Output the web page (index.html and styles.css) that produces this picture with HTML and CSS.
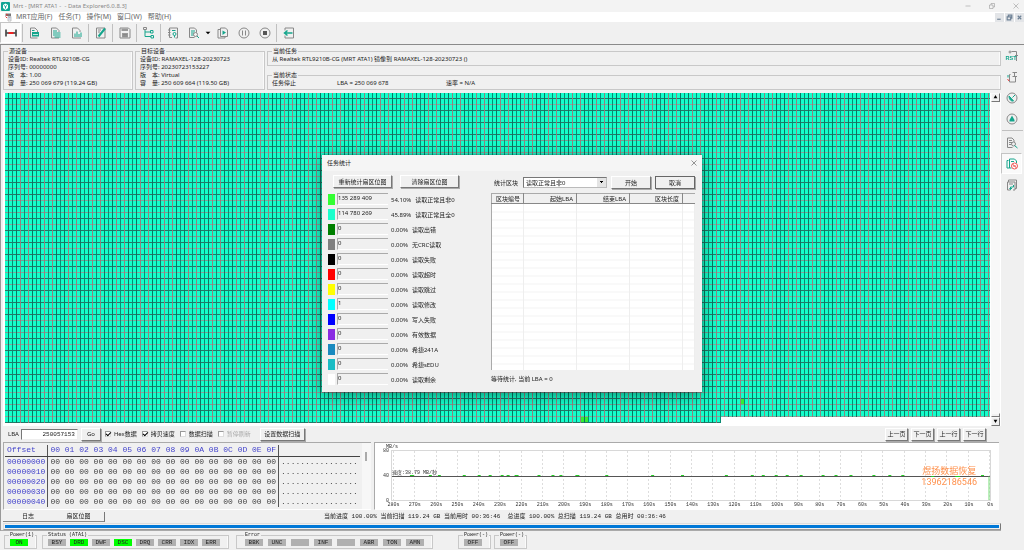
FILE: index.html
```html
<!DOCTYPE html>
<html lang="zh-CN">
<head>
  <meta charset="UTF-8" />
  <title>Mrt - [MRT ATA1 -  - Data Explorer6.0.8.3]</title>
  <link rel="stylesheet" href="styles.css">
</head>
<body>
<div class="app">

  <header class="titlebar">
    <svg class="logo" viewBox="0 0 18 18"><rect width="18" height="18" rx="2" fill="#12a594"/><path d="M4 6l5-3 5 3v6l-5 4-5-4z" fill="#fff"/><path d="M6 7l3 2 3-2M9 9v4" stroke="#12a594" stroke-width="2" fill="none"/></svg>
    <span class="title">Mrt - [MRT ATA1 -&nbsp; - Data Explorer6.0.8.3]</span>
    <div class="win-buttons">
      <button aria-label="最小化"><svg viewBox="0 0 12 12"><path d="M1 6h10"/></svg></button>
      <button aria-label="还原"><svg viewBox="0 0 12 12"><path d="M1 4h7v7H1zM4 4V1h7v7H8"/></svg></button>
      <button aria-label="关闭"><svg viewBox="0 0 12 12"><path d="M1 1l10 10M11 1L1 11"/></svg></button>
    </div>
  </header>

  <nav class="menubar">
    <svg class="doc-icon" viewBox="0 0 14 18"><path d="M1 1h11v5H1z" fill="#777"/><path d="M2 2l4 3" stroke="#e33" stroke-width="2"/><path d="M6 7h6v9H6z" fill="#fff" stroke="#888"/><path d="M7 9h4M7 12h4" stroke="#46a"/><path d="M1 7l3 3" stroke="#e33" stroke-width="2"/></svg>
    <a href="#">MRT应用(F)</a>
    <a href="#">任务(T)</a>
    <a href="#">操作(M)</a>
    <a href="#">窗口(W)</a>
    <a href="#">帮助(H)</a>
    <div class="mdi-buttons">
      <button aria-label="最小化"><svg viewBox="0 0 12 12"><path d="M2 9h6"/></svg></button>
      <button aria-label="还原"><svg viewBox="0 0 12 12"><path d="M2 5h6v5H2zM4 5V2h6v5H8"/></svg></button>
      <button aria-label="关闭"><svg viewBox="0 0 12 12"><path d="M3 3l6 6M9 3L3 9"/></svg></button>
    </div>
  </nav>

  <div class="toolbar">
    <button class="tool active" aria-label="连接"><svg viewBox="0 0 24 24"><path d="M2 5v14M22 5v14" stroke="#333" stroke-width="3"/><path d="M3 12h18" stroke="#333" stroke-width="3"/><path d="M7 12h10" stroke="#e22" stroke-width="4"/></svg></button>
    <i class="sep"></i>
    <button class="tool" aria-label="十六进制"><svg viewBox="0 0 24 24"><path class="g" d="M17 22H3V2h9l5 5v3"/><path class="t" d="M6 7h5"/><path d="M6 10h14v9H6z" fill="#14a58c"/><path d="M8 15h10" stroke="#bfe8e0" stroke-width="2"/></svg></button>
    <button class="tool" aria-label="列表"><svg viewBox="0 0 24 24"><path class="g" d="M18 22H3V2h10l5 5v3"/><path class="t" d="M6 8h8M6 12h15M6 16h15M9 20h12"/></svg></button>
    <button class="tool" aria-label="统计"><svg viewBox="0 0 24 24"><path class="g" d="M13 2H3v20h17M13 2l5 5v3"/><path class="t" d="M8 20v-7M12 20V9M16 20v-6M20 20v-9"/></svg></button>
    <i class="sep"></i>
    <button class="tool" aria-label="编辑"><svg viewBox="0 0 24 24"><path class="g" d="M3 2h17v20H3z"/><path class="g" d="M6 6h6M6 10h4"/><path d="M20 3L7 19" stroke="#14a58c" stroke-width="4"/></svg></button>
    <i class="sep"></i>
    <button class="tool" aria-label="保存"><svg viewBox="0 0 24 24"><path class="g" d="M2 2h17l3 3v17H2z"/><path d="M5 3h13v5H5zM6 12h12v9H6z" fill="#999"/><path class="g" d="M8 15h8M8 18h8"/></svg></button>
    <i class="sep"></i>
    <button class="tool" aria-label="结构"><svg viewBox="0 0 24 24"><path class="t" d="M4 5v14h12M4 10h11M15 7h5v5h-5zM16 17h5v5h-5z"/><path class="g" d="M1 1h6v4H1z"/></svg></button>
    <i class="sep"></i>
    <button class="tool" aria-label="参数"><svg viewBox="0 0 24 24"><path class="g" d="M5 2h16v20h-4M5 2v19h5M2 6h5M2 11h5M2 16h5"/><path class="t" d="M10 7h7"/><circle class="t" cx="15" cy="14" r="3"/><path class="t" d="M15 17v4"/></svg></button>
    <button class="tool" aria-label="查找"><svg viewBox="0 0 24 24"><path class="g" d="M3 2h10l4 4v5M3 2v19h10"/><path class="t" d="M6 8h8M6 12h6M6 16h5M18 18l4 4"/><circle class="g" cx="15" cy="15" r="4"/></svg></button>
    <button class="drop" aria-label="更多"><svg viewBox="0 0 10 6"><path d="M1 1h8L5 5z"/></svg></button>
    <button class="tool" aria-label="复制"><svg viewBox="0 0 24 24"><path class="g" d="M6 5H2v17h14v-3M7 2h10l4 4v13H7z"/><path d="M11 7l7 4-7 5z" fill="#14a58c"/></svg></button>
    <button class="tool" aria-label="暂停"><svg viewBox="0 0 24 24"><circle class="g" cx="12" cy="12" r="10"/><path class="g" d="M9 7v10M15 7v10"/></svg></button>
    <button class="tool" aria-label="停止"><svg viewBox="0 0 24 24"><circle class="g" cx="12" cy="12" r="10"/><path d="M8 8h8v8H8z" fill="#555"/></svg></button>
    <i class="sep"></i>
    <button class="tool" aria-label="退出"><svg viewBox="0 0 24 24"><path class="g" d="M4 7V2h17v20H4v-5"/><path d="M19 12H3M9 7l-6 5 6 5" stroke="#14a58c" stroke-width="3" fill="none"/></svg></button>
  </div>

  <div class="body">
    <main class="workspace">

      <section class="info">
        <fieldset class="device">
          <legend>源设备</legend>
          <p>设备ID: Realtek RTL9210B-CG</p>
          <p>序列号: 00000000</p>
          <p>版　本: 1.00</p>
          <p>容　量: 250 069 679 (119.24 GB)</p>
        </fieldset>
        <fieldset class="device">
          <legend>目标设备</legend>
          <p>设备ID: RAMAXEL-128-20230723</p>
          <p>序列号: 20230723153227</p>
          <p>版　本: Virtual</p>
          <p>容　量: 250 609 664 (119.50 GB)</p>
        </fieldset>
        <div class="task">
          <fieldset>
            <legend>当前任务</legend>
            <p>从 Realtek RTL9210B-CG (MRT ATA1) 镜像到 RAMAXEL-128-20230723 ()</p>
          </fieldset>
          <fieldset>
            <legend>当前状态</legend>
            <p class="state"><span>任务停止</span><span>LBA = 250 069 678</span><span>速率 = N/A</span></p>
          </fieldset>
        </div>
      </section>

      <section class="map">
        <div class="map-area"><canvas id="sectorMap"></canvas></div>
        <div class="scroll">
          <button aria-label="向上">▲</button>
          <span class="thumb"></span>
          <button aria-label="向下">▼</button>
        </div>
      </section>

      <section class="controls">
        <label for="lba">LBA</label>
        <input id="lba" class="lba" type="text" value="250057153">
        <button class="btn go">Go</button>
        <label class="check"><input type="checkbox" checked>Hex数据</label>
        <label class="check"><input type="checkbox" checked>拷贝速度</label>
        <label class="check"><input type="checkbox">数据扫描</label>
        <label class="check disabled"><input type="checkbox" disabled>暂停刷新</label>
        <button class="btn set">设置数据扫描</button>
        <div class="pager">
          <button class="btn">上一页</button>
          <button class="btn">下一页</button>
          <button class="btn">上一行</button>
          <button class="btn">下一行</button>
        </div>
      </section>

      <section class="panels">
        <div class="hex">
          <table>
            <thead>
              <tr><th>Offset</th><th>00 01 02 03 04 05 06 07 08 09 0A 0B 0C 0D 0E 0F</th><th></th></tr>
            </thead>
            <tbody id="hexRows"></tbody>
          </table>
          <div class="hex-scroll"><span></span></div>
        </div>
        <div class="chart">
          <div class="unit">MB/s</div>
          <div class="chart-row">
            <div class="y-axis"><span>80</span><span>40</span><span>0</span></div>
            <div class="plot">
              <div class="grid" id="grid"></div>
              <svg class="line" viewBox="0 0 600 48" preserveAspectRatio="none">
                <path d="M0 25H600" stroke="#555" stroke-width="1"/>
                <path d="M18 24h4M37 24h3M46 24h3M71 24h3M86 24h3M97 24h3M109 24h3M115 24h3M123 24h4M146 24h3M160 24h3M168 24h3M184 24h4M214 24h3M260 24h3M290 24h3M334 24h3M360 24h3M371 24h3M384 24h3M395 24h3M409 24h3M431 24h3M444 24h3M459 24h3M482 24h3M498 24h3M511 24h3M541 25h3M565 25h5M591 24h3" stroke="#2c2" stroke-width="1"/>
                <path d="M599 25V48" stroke="#7d7" stroke-width="1"/>
              </svg>
              <span class="speed">速度:38.79 MB/秒</span>
              <div class="contact">煜扬数据恢复<br>13962186546</div>
            </div>
          </div>
          <div class="x-axis" id="xAxis"></div>
        </div>
      </section>

      <section class="tabs">
        <button class="tab">日志</button>
        <button class="tab current">扇区位图</button>
        <p class="progress-text"><span>当前进度 100.00% 当前扫描 119.24 GB 当前用时 00:36:46</span><span>总进度 100.00% 总扫描 119.24 GB 总用时 00:36:46</span></p>
      </section>
      <div class="progress"><div></div></div>
    </main>

    <aside class="sidebar">
      <button class="tool" aria-label="复位"><svg viewBox="0 0 24 24"><path class="g" d="M11 3h10v19M18 11h6"/><circle class="g" cx="8" cy="4" r="2"/><text x="-1" y="19">RST</text></svg></button>
      <button class="tool" aria-label="电源"><svg viewBox="0 0 24 24"><path class="g" d="M9 7H7v15h12V11M13 3h9M17 3v8M13 11h9"/><path class="t" d="M4 8v5"/><path d="M3 16l3 4" stroke="#e44" stroke-width="2"/></svg></button>
      <button class="tool" aria-label="转速"><svg viewBox="0 0 24 24"><circle class="g" cx="12" cy="12" r="10"/><path d="M6 8c0 8 5 11 9 10l-4-5zM13 11l5-5" fill="#14a58c" stroke="#14a58c" stroke-width="2"/></svg></button>
      <button class="tool" aria-label="警告"><svg viewBox="0 0 24 24"><circle class="g" cx="12" cy="12" r="10"/><path d="M12 5l5 9v3H7v-3z" fill="#14a58c"/></svg></button>
      <i class="hsep"></i>
      <button class="tool" aria-label="日志查找"><svg viewBox="0 0 24 24"><path class="g" d="M16 10V6l-4-4H3v19h10M6 7h6M6 11h6M6 15h4"/><circle class="g" cx="15" cy="14" r="4"/><path class="t" d="M17 17l6 5"/></svg></button>
      <button class="tool active" aria-label="停用"><svg viewBox="0 0 24 24"><path class="t" d="M5 5H2v15h5M7 2h10l4 4v4M7 2v18h4M10 7h6"/><circle cx="17" cy="16" r="6" fill="#fff" stroke="#e55" stroke-width="2"/><path d="M13 12l8 8M14 16h6" stroke="#e55" stroke-width="2"/></svg></button>
      <button class="tool" aria-label="导出"><svg viewBox="0 0 24 24"><path class="g" d="M9 22H3V6h15v16h-4M5 6V2h16v17h-3M6 10h8"/><path class="t" d="M15 12v4H9v5M7 18l2 3 3-3"/></svg></button>
    </aside>
  </div>

  <footer class="statusbar">
    <fieldset class="power">
      <legend>Power(1)</legend>
      <span class="led on">ON</span>
    </fieldset>
    <fieldset class="status">
      <legend>Status (ATA1)</legend>
      <span class="led">BSY</span><span class="led on">DRD</span><span class="led">DWF</span><span class="led on">DSC</span><span class="led">DRQ</span><span class="led">CRR</span><span class="led">IDX</span><span class="led">ERR</span>
    </fieldset>
    <fieldset class="error">
      <legend>Error</legend>
      <span class="led">BBK</span><span class="led">UNC</span><span class="led"></span><span class="led">INF</span><span class="led"></span><span class="led">ABR</span><span class="led">TON</span><span class="led">AMN</span>
    </fieldset>
    <fieldset class="power off">
      <legend>Power(-)</legend>
      <span class="led">OFF</span>
    </fieldset>
    <fieldset class="power">
      <legend>Power(-)</legend>
      <span class="led">OFF</span>
    </fieldset>
  </footer>
</div>

<div class="overlay">
  <div class="dialog" role="dialog" aria-labelledby="dialogTitle">
    <div class="dialog-title">
      <span id="dialogTitle">任务统计</span>
      <button aria-label="关闭"><svg viewBox="0 0 12 12"><path d="M1 1l10 10M11 1L1 11"/></svg></button>
    </div>
    <div class="dialog-body">
      <div class="stats">
        <div class="stat-buttons">
          <button class="btn">重新统计扇区位图</button>
          <button class="btn">清除扇区位图</button>
        </div>
        <div id="statRows"></div>
      </div>
      <div class="blocks">
        <div class="block-bar">
          <label for="blockType">统计区块</label>
          <select id="blockType"><option>读取正常且非0</option></select>
          <button class="btn">开始</button>
          <button class="btn default">取消</button>
        </div>
        <table class="block-table">
          <thead>
            <tr><th>区块编号</th><th>起始LBA</th><th>结束LBA</th><th>区块长度</th><th></th></tr>
          </thead>
          <tbody>
            <tr><td></td><td></td><td></td><td></td><td></td></tr>
          </tbody>
        </table>
        <p class="wait">等待统计, 当前 LBA = 0</p>
      </div>
    </div>
  </div>
</div>

<script>
  // color, count, percent, name
  const stats = [
    ['#33ff33', '135 289 409', '54.10%', '读取正常且非0'],
    ['#1affcc', '114 780 269', '45.89%', '读取正常且全0'],
    ['#008000', '0', '0.00%', '读取出错'],
    ['#808080', '0', '0.00%', '无CRC读取'],
    ['#000000', '0', '0.00%', '读取失败'],
    ['#ff0000', '0', '0.00%', '读取超时'],
    ['#ffff00', '0', '0.00%', '读取跳过'],
    ['#00ffff', '1', '0.00%', '读取修改'],
    ['#0000ff', '0', '0.00%', '写入失败'],
    ['#8a2be2', '0', '0.00%', '有效数据'],
    ['#1a8abf', '0', '0.00%', '希捷241A'],
    ['#1abcc4', '0', '0.00%', '希捷sEDU'],
    ['#ffffff', '0', '0.00%', '读取剩余']
  ];
  document.getElementById('statRows').innerHTML = stats.map((s, i) => `
    <div class="stat">
      <i class="swatch" style="background:${s[0]}"></i>
      <input id="stat${i}" type="text" value="${s[1]}" readonly>
      <label for="stat${i}"><span>${s[2]}</span><span>${s[3]}</span></label>
    </div>`).join('');

  let hex = '';
  for (let i = 0; i < 5; i++) {
    hex += `<tr><th>000000${i}0</th><td>${Array(16).fill('00').join(' ')}</td><td>${'.'.repeat(16)}</td></tr>`;
  }
  document.getElementById('hexRows').innerHTML = hex;

  let ticks = '';
  let lines = '';
  for (let s = 280; s >= 0; s -= 10) {
    ticks += `<span>${s}s</span>`;
    lines += '<i></i>';
  }
  document.getElementById('xAxis').innerHTML = ticks;
  document.getElementById('grid').innerHTML = lines;

  const CELL_W = 4;
  const CELL_H = 6;
  function drawMap() {
    const canvas = document.getElementById('sectorMap');
    const area = canvas.parentElement;
    canvas.width = area.clientWidth;
    canvas.height = area.clientHeight;
    const ctx = canvas.getContext('2d');
    const cols = Math.ceil(canvas.width / CELL_W);
    const rows = Math.floor(canvas.height / CELL_H);
    const last = Math.round(cols * 0.723);
    const vLines = ['#0b7561', '#0b8a72', '#0b7561', '#8d8580', '#0b8a72', '#8d8580'];
    const hLines = ['#2b7466', '#8aa39a', '#2b7466', '#7c9a90'];

    for (let r = 0; r < rows; r++) {
      const count = r === rows - 1 ? last : cols;
      const y = r * CELL_H;
      ctx.fillStyle = '#14ffcb';
      ctx.fillRect(0, y, count * CELL_W, CELL_H);
      ctx.fillStyle = hLines[r % hLines.length];
      ctx.fillRect(0, y + 5, count * CELL_W, 1);
      for (let c = 0; c < count; c++) {
        ctx.fillStyle = vLines[c % vLines.length];
        ctx.fillRect(c * CELL_W + 3, y, 1, CELL_H);
      }
    }
    // sectors read with data
    ctx.fillStyle = '#33ee33';
    const x = Math.round(cols * 0.585) * CELL_W;
    ctx.fillRect(x, (rows - 1) * CELL_H, 3, 5);
    ctx.fillRect(x + CELL_W, (rows - 1) * CELL_H, 3, 5);
    ctx.fillRect(Math.round(cols * 0.745) * CELL_W, (rows - 4) * CELL_H, 3, 5);
  }
  window.addEventListener('resize', drawMap);
  drawMap();
</script>
</body>
</html>
```
FILE: styles.css
```css
* {
  box-sizing: border-box;
}
body {
  margin: 0;
  background: #f0f0f0;
  color: #222;
  font: 6px/8px "Noto Sans", "Noto Sans CJK SC", sans-serif;
}
p {
  margin: 0;
}
button, input, select {
  margin: 0;
  padding: 0;
  border: 0;
  border-radius: 0;
  background: none;
  color: inherit;
  font: inherit;
  appearance: none;
}
fieldset {
  margin: 0;
  padding: 0 4px 2px;
  min-width: 0;
  border: 1px solid #c8c8c8;
  box-shadow: inset -1px 0 #fafafa;
}
legend {
  padding: 0 1px;
}
svg {
  display: block;
  fill: none;
}
.app {
  display: flex;
  flex-direction: column;
  height: 100vh;
  min-height: 500px;
}

/* title and menu */
.titlebar {
  display: flex;
  align-items: center;
  height: 12px;
  padding: 0 5px 0 1px;
  background: #f3f3f3;
  color: #888;
  gap: 3px;
}
.logo {
  width: 9px;
  height: 9px;
}
.win-buttons {
  display: flex;
  gap: 18px;
  margin-left: auto;
}
.win-buttons svg {
  width: 6px;
  height: 6px;
  stroke: #888;
  stroke-width: 1;
}
.menubar {
  display: flex;
  align-items: center;
  height: 10px;
  padding-left: 5px;
  background: #fff;
  gap: 6px;
  font-size: 7px;
}
.menubar a {
  color: #666;
  text-decoration: none;
}
.doc-icon {
  width: 7px;
  height: 9px;
  margin-right: -2px;
}
.mdi-buttons {
  display: flex;
  gap: 1px;
  margin-left: auto;
}
.mdi-buttons button {
  padding: 1px;
  background: #e3e5e8;
}
.mdi-buttons svg {
  width: 7px;
  height: 7px;
  stroke: #6f8296;
  stroke-width: 2;
}

/* toolbar */
.toolbar {
  display: flex;
  height: 23px;
  border-bottom: 1px solid #8a8a8a;
}
.tool {
  display: flex;
  align-items: center;
  justify-content: center;
  width: 21px;
  height: 21px;
}
.tool svg {
  width: 12px;
  height: 12px;
  overflow: visible;
}
.tool.active {
  background: #fafafa;
  border: 1px solid #c4c4c4;
  border-right-color: #fff;
  border-bottom-color: #fff;
}
.g {
  stroke: #888;
  stroke-width: 2;
}
.t {
  stroke: #14a58c;
  stroke-width: 2;
}
.tool text {
  fill: #14a58c;
  font: bold 11px "Liberation Sans", sans-serif;
}
.drop {
  width: 8px;
}
.drop svg {
  width: 6px;
  height: 4px;
  margin-left: 1px;
  fill: #000;
}
.sep {
  width: 1px;
  margin: 2px 1px;
  background: #c0c0c0;
}
.body {
  display: flex;
  flex: 1;
  min-height: 0;
}
.workspace {
  display: flex;
  flex: 1;
  flex-direction: column;
  min-width: 0;
  padding: 2px 0 0 2px;
  border-left: 1px solid #999;
  border-bottom: 1px solid #aaa;
}
.sidebar {
  width: 23px;
}
.hsep {
  display: block;
  height: 1px;
  margin: 1px;
  background: #c0c0c0;
}

/* device info */
.info {
  display: flex;
  gap: 2px;
}
.device {
  width: 130px;
}
.task {
  display: flex;
  flex: 1;
  flex-direction: column;
  justify-content: space-between;
}
.state {
  display: flex;
}
.state span:first-child {
  width: 65px;
}
.state span:nth-child(2) {
  width: 109px;
}

/* sector map */
.map {
  display: flex;
  flex: 1;
  min-height: 0;
  margin-top: 3px;
  padding-left: 2px;
  background: #fff;
}
.map-area {
  flex: 1;
  min-width: 0;
  overflow: hidden;
}
.map-area canvas {
  display: block;
}
.scroll {
  display: flex;
  flex-direction: column;
  width: 9px;
  margin: 0 1px;
  background: #f8f8f8;
}
.scroll button, .thumb {
  height: 9px;
  border: 1px solid #f8f8f8;
  border-right-color: #777;
  border-bottom-color: #777;
  background: #f0f0f0;
  font-size: 4px;
  line-height: 6px;
  color: #000;
}
.thumb {
  height: 4px;
  margin-top: auto;
}

/* controls */
.controls {
  display: flex;
  align-items: center;
  height: 16px;
  padding: 0 15px 0 5px;
}
.lba {
  width: 57px;
  height: 11px;
  margin: 0 3px 0 2px;
  padding-right: 2px;
  background: #fff;
  border: 1px solid #777;
  border-right-color: #eee;
  border-bottom-color: #eee;
  font: 6px "Liberation Mono", monospace;
  text-align: right;
}
.btn {
  height: 13px;
  background: #f0f0f0;
  border: 1px solid #fff;
  border-right-color: #777;
  border-bottom-color: #777;
  box-shadow: 1px 1px #aaa;
  white-space: nowrap;
}
.go {
  width: 20px;
  margin-right: 4px;
}
.set {
  width: 45px;
  margin-left: 4px;
}
.check {
  display: flex;
  align-items: center;
  gap: 3px;
  margin-right: 5px;
}
.check input {
  width: 6px;
  height: 6px;
  background: #fff;
  border: 1px solid #999;
  border-right-color: #ddd;
  border-bottom-color: #ddd;
}
.check input:checked::before {
  content: "";
  display: block;
  width: 4px;
  height: 2px;
  border: solid #000;
  border-width: 0 0 1px 1px;
  transform: rotate(-45deg);
}
.disabled {
  color: #aaa;
}
.pager {
  display: flex;
  gap: 3px;
  margin-left: auto;
}
.pager .btn {
  width: 23px;
}

/* hex and chart */
.panels {
  display: flex;
  height: 68px;
  gap: 3px;
}
.hex {
  display: flex;
  justify-content: space-between;
  width: 368px;
  border: 1px solid #aaa;
  border-right: 0;
  border-bottom-color: #fff;
}
.hex table {
  margin: 2px 0 0 1px;
  align-self: flex-start;
  border-collapse: collapse;
  font: 8px/10px "Liberation Mono", monospace;
  white-space: pre;
}
.hex th {
  padding: 0 2px;
  color: #4444cc;
  font-weight: normal;
  text-align: left;
}
.hex td {
  padding: 0 2px;
  color: #444;
}
.hex tr > :first-child {
  border-right: 1px solid #555;
}
.hex tr > :nth-child(2) {
  border-right: 1px solid #555;
}
.hex thead th {
  height: 11px;
  border-bottom: 1px solid #444;
}
.hex-scroll {
  width: 9px;
  padding: 9px 3px;
  background: #f7f7f7;
}
.hex-scroll span {
  display: block;
  width: 2px;
  height: 9px;
  background: #aaa;
}
.chart {
  display: flex;
  flex: 1;
  flex-direction: column;
  margin-right: 2px;
  padding: 1px 8px 0 0;
  background: #fff;
  border: 1px solid #aaa;
  border-right: 0;
  border-bottom-color: #fff;
  color: #333;
  font: 5px/6px "Liberation Mono", "Noto Sans CJK SC", monospace;
}
.unit {
  padding-left: 11px;
}
.chart-row {
  display: flex;
  flex: 1;
}
.y-axis {
  display: flex;
  flex-direction: column;
  justify-content: space-between;
  width: 16px;
  margin: -2px 0 -3px;
  padding-right: 2px;
  text-align: right;
}
.plot {
  position: relative;
  flex: 1;
  border: 1px solid #d8d8d8;
}
.grid {
  display: flex;
  justify-content: space-between;
  height: 100%;
  padding-left: 1px;
}
.grid i {
  width: 1px;
  background: repeating-linear-gradient(#ddd 0 2px, #fff 2px 4px);
}
.line {
  position: absolute;
  inset: 0;
  width: 100%;
  height: 100%;
}
.speed {
  position: absolute;
  left: 0;
  bottom: 50%;
}
.contact {
  position: absolute;
  right: 13px;
  top: 15px;
  color: #ff914d;
  font: 9px/11px Roboto, "Noto Sans CJK SC", sans-serif;
  text-align: center;
}
.x-axis {
  display: flex;
  justify-content: space-between;
  height: 8px;
  padding: 1px 0 0 18px;
}
.x-axis span {
  display: flex;
  justify-content: center;
  width: 1px;
}

/* tabs and progress */
.tabs {
  display: flex;
  align-items: center;
  height: 13px;
}
.tab {
  width: 50px;
  height: 10px;
  border-bottom: 1px solid #888;
}
.tab.current {
  width: 52px;
  border-right: 1px solid #777;
}
.progress-text {
  display: flex;
  gap: 7px;
  margin-left: 219px;
  font-family: "Liberation Mono", "Noto Sans CJK SC", monospace;
  white-space: nowrap;
}
.progress {
  height: 7px;
  padding: 1px;
  border: 1px solid #ddd;
  border-right-color: #777;
  border-bottom-color: #999;
}
.progress div {
  height: 3px;
  background: #0078d7;
}

/* status bar */
.statusbar {
  display: flex;
  height: 19px;
  padding: 1px 4px;
  gap: 5px;
  font: 5px/6px "Liberation Mono", monospace;
}
.statusbar fieldset {
  display: flex;
  gap: 4px;
  height: 17px;
  padding: 1px 5px;
}
.statusbar legend {
  margin-left: -1px;
}
.led {
  width: 18px;
  height: 7px;
  background: #b0b0b0;
  font-size: 6px;
  line-height: 7px;
  text-align: center;
}
.led.on {
  background: #0f0;
}
.power {
  width: 33px;
}
.status {
  width: 187px;
}
.statusbar .error {
  width: 197px;
  gap: 5px;
  margin: 0 20px 0 2px;
  padding-left: 8px;
}
.power.off {
  margin-right: -2px;
}

/* statistics dialog */
.overlay {
  position: fixed;
  inset: 0;
  display: flex;
  align-items: center;
  justify-content: center;
  padding-bottom: 3px;
}
.dialog {
  width: 380px;
  background: #f0f0f0;
  box-shadow: 0 3px 14px rgba(0, 0, 0, 0.45), 0 0 1px #333;
}
.dialog-title {
  display: flex;
  align-items: center;
  justify-content: space-between;
  height: 16px;
  padding: 0 5px;
  background: #f5f5f5;
}
.dialog-title svg {
  width: 6px;
  height: 6px;
  stroke: #333;
  stroke-width: 1;
}
.dialog-body {
  display: flex;
  justify-content: space-between;
  padding: 4px 7px 4px 6px;
}
.stat-buttons {
  display: flex;
  gap: 8px;
  padding: 0 0 5px 5px;
}
.stat-buttons .btn {
  width: 59px;
}
.stat {
  display: flex;
  height: 15px;
}
.swatch {
  width: 7px;
  height: 11px;
  margin: 1px 2px 0 0;
}
.stat input {
  width: 51px;
  height: 12px;
  margin-right: 3px;
  padding-bottom: 2px;
  border-top: 1px solid #aaa;
  border-left: 1px solid #aaa;
  border-bottom: 1px solid #fff;
}
.stat label {
  display: flex;
  gap: 4px;
  padding-top: 3px;
}
.blocks {
  width: 204px;
}
.block-bar {
  display: flex;
  align-items: center;
  padding: 1px 0 4px 3px;
}
.block-bar select {
  width: 84px;
  height: 11px;
  margin: 0 4px 0 auto;
  padding-left: 2px;
  background-color: #fff;
  background-image: conic-gradient(from -45deg at 50% 70%, #000 90deg, #0000 0), linear-gradient(#e4e4e4, #e4e4e4);
  background-position: right 2px center, right;
  background-size: 5px 3px, 9px 9px;
  background-repeat: no-repeat;
  border: 1px solid #777;
  border-right-color: #bbb;
  border-bottom-color: #bbb;
}
.block-bar .btn {
  width: 40px;
}
.block-bar .default {
  margin-left: 4px;
  border-color: #666;
}
.block-table {
  width: 100%;
  border-collapse: collapse;
  table-layout: fixed;
  background: #fff;
  border-left: 1px solid #aaa;
}
.block-table th {
  height: 10px;
  padding: 0 3px;
  background: #f0f0f0;
  border-top: 1px solid #aaa;
  border-right: 1px solid #888;
  border-bottom: 1px solid #888;
  font-weight: normal;
  text-align: right;
}
.block-table th:first-child {
  width: 32px;
}
.block-table th:last-child {
  width: 12px;
  border-right: 0;
}
.block-table td {
  height: 166px;
  border-right: 1px solid #eee;
  background: repeating-linear-gradient(#fff 0 7px, #f2f2f2 7px 8px);
}
.wait {
  padding-top: 5px;
}
```
